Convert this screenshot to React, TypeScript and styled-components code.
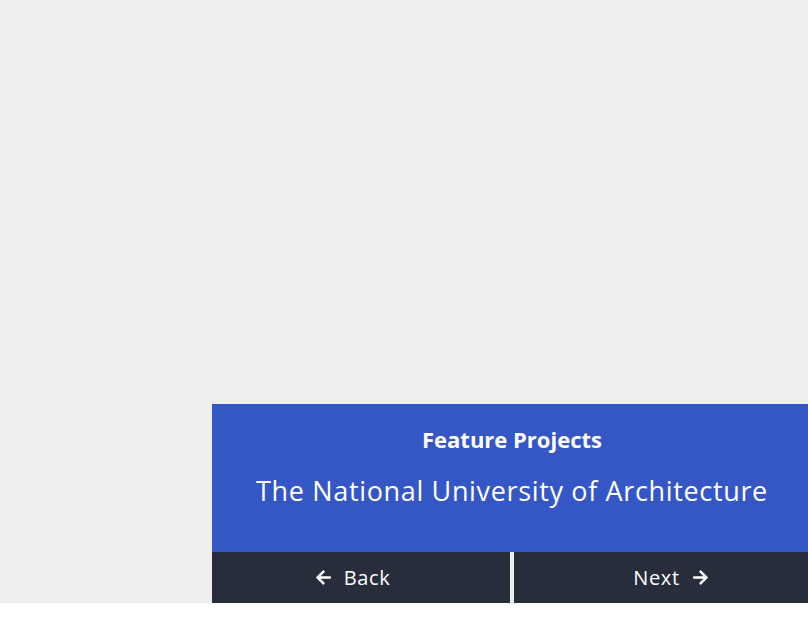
import React from "react";
import styled, { createGlobalStyle } from "styled-components";
import { FaArrowLeft, FaArrowRight } from "react-icons/fa";

const GlobalStyle = createGlobalStyle`
  html, body {
    margin: 0;
    padding: 0;
    background: #ffffff;
  }
  body {
    font-family: "Open Sans", "Noto Sans", Arial, sans-serif;
  }
  * { box-sizing: border-box; }
`;

const Stage = styled.div`
  height: 603px;
  background: #eeeeee;
  display: flex;
  flex-direction: column;
  justify-content: flex-end;
  align-items: flex-end;
`;

const Card = styled.section`
  width: 596px;
  display: flex;
  flex-direction: column;
`;

const Info = styled.div`
  height: 148px;
  background: #3557c6;
  color: #ffffff;
  display: flex;
  flex-direction: column;
  align-items: center;
  padding: 20px 0 0 4px;
`;

const Eyebrow = styled.h3`
  margin: 0;
  font-size: 22px;
  line-height: 30px;
  font-weight: 700;
`;

const Title = styled.h2`
  margin: 19px 0 0;
  font-size: 27px;
  line-height: 36px;
  font-weight: 400;
  letter-spacing: 0.65px;
`;

const Nav = styled.nav`
  height: 51px;
  display: grid;
  grid-template-columns: 1fr 1fr;
  background: #282d3b;
`;

const NavButton = styled.button<{ $side: "left" | "right" }>`
  appearance: none;
  border: none;
  border-left: ${(p) => (p.$side === "right" ? "4px solid #eeeeee" : "none")};
  background: #282d3b;
  color: #ffffff;
  font-family: "Open Sans", "Noto Sans", Arial, sans-serif;
  font-size: 20px;
  letter-spacing: 0.6px;
  display: flex;
  align-items: center;
  justify-content: center;
  gap: 12px;
  padding: 0;
  padding-right: ${(p) => (p.$side === "left" ? "17px" : "0")};
  padding-left: ${(p) => (p.$side === "right" ? "20px" : "0")};
  cursor: pointer;

  svg {
    width: 17px;
    height: 17px;
    flex: none;
  }
`;

export default function App() {
  return (
    <>
      <GlobalStyle />
      <Stage>
        <Card>
          <Info>
            <Eyebrow>Feature Projects</Eyebrow>
            <Title>The National University of Architecture</Title>
          </Info>
          <Nav>
            <NavButton $side="left">
              <FaArrowLeft />
              Back
            </NavButton>
            <NavButton $side="right">
              Next
              <FaArrowRight />
            </NavButton>
          </Nav>
        </Card>
      </Stage>
    </>
  );
}
